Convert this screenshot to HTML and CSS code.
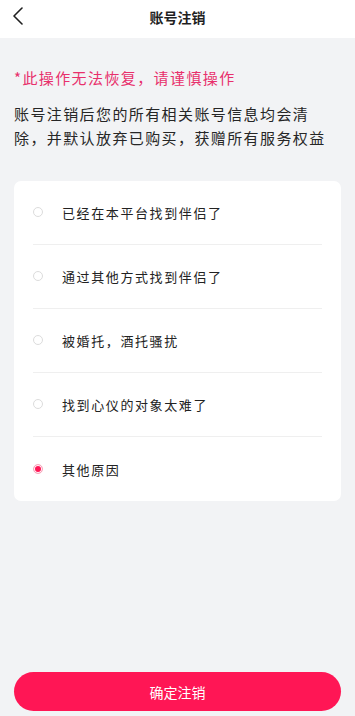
FILE: index.html
```html
<!DOCTYPE html>
<html lang="zh-CN">
<head>
<meta charset="utf-8">
<meta name="viewport" content="width=device-width, initial-scale=1">
<title>账号注销</title>
<link rel="stylesheet" href="styles.css">
</head>
<body>
<div class="page">
  <header class="topbar">
    <span class="back">
      <svg width="12" height="18" viewBox="0 0 12 18"><polyline points="10,1 2,9 10,17" fill="none" stroke="#1f1f1f" stroke-width="1.6" stroke-linecap="round" stroke-linejoin="round"/></svg>
    </span>
    <h1 class="title">账号注销</h1>
  </header>
  <main class="content">
    <p class="warning">*此操作无法恢复，请谨慎操作</p>
    <p class="desc">账号注销后您的所有相关账号信息均会清除，并默认放弃已购买，获赠所有服务权益</p>
    <ul class="card">
      <li class="row"><span class="radio"></span><span class="label">已经在本平台找到伴侣了</span></li>
      <li class="row"><span class="radio"></span><span class="label">通过其他方式找到伴侣了</span></li>
      <li class="row"><span class="radio"></span><span class="label">被婚托，酒托骚扰</span></li>
      <li class="row"><span class="radio"></span><span class="label">找到心仪的对象太难了</span></li>
      <li class="row"><span class="radio checked"></span><span class="label">其他原因</span></li>
    </ul>
    <button class="confirm">确定注销</button>
  </main>
</div>
</body>
</html>
```

FILE: styles.css
```css
* { box-sizing: border-box; }
html, body {
  margin: 0;
  padding: 0;
  background: #f2f3f5;
  font-family: "Noto Sans CJK SC", "Noto Sans", sans-serif;
  color: #222;
}
.page {
  height: 716px;
  display: flex;
  flex-direction: column;
}
.topbar {
  position: relative;
  height: 38px;
  background: #fff;
  display: flex;
  align-items: center;
  justify-content: center;
  flex-shrink: 0;
}
.back {
  position: absolute;
  left: 12px;
  top: 7px;
  width: 12px;
  height: 18px;
  display: flex;
}
.title {
  margin: 0;
  font-size: 14px;
  font-weight: 600;
  line-height: 20px;
  margin-top: -4px;
  color: #1f1f1f;
}
.content {
  flex: 1;
  display: flex;
  flex-direction: column;
  padding: 0 14px 5px;
}
.warning {
  margin: 28px 0 0;
  font-size: 15px;
  line-height: 24px;
  letter-spacing: 1.4px;
  color: #e8306c;
}
.desc {
  margin: 12px 0 0;
  font-size: 15px;
  line-height: 24px;
  letter-spacing: 1.4px;
  color: #262626;
}
.card {
  list-style: none;
  margin: 31px 0 0;
  padding: 0 19px;
  background: #fff;
  border-radius: 7px;
}
.row {
  height: 64px;
  display: flex;
  align-items: center;
  border-bottom: 1px solid #efefef;
}
.row:last-child { border-bottom: none; }
.radio {
  width: 10px;
  height: 10px;
  border-radius: 50%;
  border: 1px solid #dcdcdc;
  flex-shrink: 0;
  margin-top: -1px;
}
.radio.checked {
  border: 1px solid #f7a5bb;
  background: #ff1655;
  box-shadow: inset 0 0 0 1px #fff;
  background-clip: padding-box;
}
.label {
  margin-left: 19px;
  font-size: 13px;
  letter-spacing: 1.6px;
  color: #222;
}
.confirm {
  margin-top: auto;
  height: 39px;
  border: none;
  border-radius: 20px;
  background: #ff1655;
  color: #fff;
  font-family: inherit;
  font-size: 14px;
  letter-spacing: 0;
}
```
